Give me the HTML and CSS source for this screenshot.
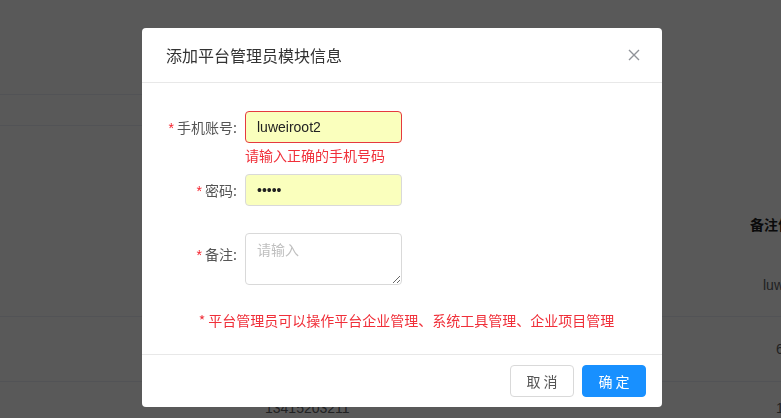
FILE: index.html
```html
<!DOCTYPE html>
<html lang="zh-CN">
<head>
  <meta charset="UTF-8" />
  <title>平台管理员</title>
  <link rel="stylesheet" href="styles.css">
</head>
<body>
  <!-- page behind the modal -->
  <div class="page">
    <div class="page-head"></div>
    <div class="page-filter"></div>
    <div class="grid">
      <div class="grid-row grid-head">
        <div class="c1"></div>
        <div class="c2"></div>
        <div class="c3">备注信息</div>
      </div>
      <div class="grid-row">
        <div class="c1"></div>
        <div class="c2"></div>
        <div class="c3 ind1">luweiroot2</div>
      </div>
      <div class="grid-row">
        <div class="c1"></div>
        <div class="c2"></div>
        <div class="c3 ind2">6</div>
      </div>
      <div class="grid-row">
        <div class="c1"></div>
        <div class="c2 low">13415203211</div>
        <div class="c3 ind2 low">1</div>
      </div>
    </div>
  </div>

  <div class="mask"></div>

  <div class="dialog-wrap">
    <div class="dialog">
      <div class="dialog-header">
        <span class="dialog-title">添加平台管理员模块信息</span>
        <svg class="dialog-close" width="12" height="12" viewBox="0 0 12 12">
          <path d="M1 1 L11 11 M11 1 L1 11" stroke="#909399" stroke-width="1.4" fill="none"/>
        </svg>
      </div>

      <div class="dialog-body">
        <div class="form-item item-phone">
          <label class="form-label"><span class="req">*</span> 手机账号:</label>
          <div class="form-field">
            <input class="form-input is-error" type="text" value="luweiroot2">
            <div class="form-error">请输入正确的手机号码</div>
          </div>
        </div>

        <div class="form-item item-pass">
          <label class="form-label"><span class="req">*</span> 密码:</label>
          <div class="form-field">
            <input class="form-input" type="password" value="12345">
          </div>
        </div>

        <div class="form-item item-note">
          <label class="form-label tall"><span class="req">*</span> 备注:</label>
          <div class="form-field">
            <textarea class="form-textarea" placeholder="请输入"></textarea>
          </div>
        </div>

        <p class="tip">* 平台管理员可以操作平台企业管理、系统工具管理、企业项目管理</p>
      </div>

      <div class="dialog-footer">
        <button class="btn">取 消</button>
        <button class="btn btn-primary">确 定</button>
      </div>
    </div>
  </div>
</body>
</html>
```

FILE: styles.css
```css
html, body {
  margin: 0;
  overflow: hidden;
  height: 100%;
}

body {
  font-family: "Liberation Sans", "Noto Sans CJK SC", sans-serif;
  font-size: 14px;
  color: #606266;
  background: #fff;
}

/* background page */
.page {
  width: 781px;
  overflow: hidden;
}

.page-head {
  width: 420px;
  height: 94px;
  border-bottom: 1px solid #ebeef5;
}

.page-filter {
  width: 420px;
  height: 30px;
  border-bottom: 1px solid #ebeef5;
}

.grid {
  margin-top: 68px;
}

.grid-row {
  display: flex;
  align-items: center;
  height: 63px;
  border-bottom: 1px solid #ebeef5;
  white-space: nowrap;
}

.grid-row.grid-head {
  height: 59px;
  border-bottom: none;
  font-weight: bold;
  color: #222;
}

.grid-row:nth-child(3) {
  height: 64px;
}

.c1 { width: 265px; flex: none; }
.c2 { width: 485px; flex: none; }
.c3 { flex: none; }

.low {
  align-self: flex-start;
  padding-top: 18px;
}

.ind1 { padding-left: 13px; }
.ind2 { padding-left: 26px; }

/* modal */
.mask {
  position: fixed;
  inset: 0;
  background: rgba(0, 0, 0, 0.65);
}

.dialog-wrap {
  position: fixed;
  inset: 0;
  padding: 28px 0 0 142px;
}

.dialog {
  width: 520px;
  background: #fff;
  border-radius: 4px;
  overflow: hidden;
}

.dialog-header {
  display: flex;
  align-items: center;
  justify-content: space-between;
  padding: 16px 22px 16px 24px;
  line-height: 22px;
  border-bottom: 1px solid #e8e8e8;
}

.dialog-title {
  font-size: 16px;
  color: #333;
  font-family: "Noto Sans CJK SC", sans-serif;
}

.dialog-close {
  display: block;
}

.dialog-body {
  padding: 28px 24px 24px 24px;
}

.form-item {
  display: flex;
  align-items: flex-start;
}

.item-phone { margin-bottom: 9px; }
.item-pass { margin-bottom: 27px; }
.item-note { margin-bottom: 25px; }

.form-label {
  width: 79px;
  box-sizing: border-box;
  padding-right: 8px;
  text-align: right;
  line-height: 32px;
  color: #555;
  font-family: "Noto Sans CJK SC", sans-serif;
}

.form-label.tall {
  line-height: 40px;
}

.req {
  color: #f5222d;
  font-family: "Liberation Sans", sans-serif;
}

.form-input {
  display: block;
  box-sizing: border-box;
  width: 157px;
  height: 32px;
  padding: 0 11px;
  border: 1px solid #d9d9d9;
  border-radius: 4px;
  background: #faffbd;
  font-family: "Liberation Sans", "Noto Sans CJK SC", sans-serif;
  font-size: 14px;
  color: #222;
  outline: none;
}

.form-input.is-error {
  border-color: #e5393f;
}

.form-error {
  margin-top: 2px;
  line-height: 20px;
  color: #f0303a;
  font-family: "Noto Sans CJK SC", sans-serif;
}

.form-textarea {
  display: block;
  box-sizing: border-box;
  width: 157px;
  height: 52px;
  margin-top: -1px;
  padding: 5px 11px;
  border: 1px solid #d9d9d9;
  border-radius: 4px;
  font-family: "Noto Sans CJK SC", sans-serif;
  font-size: 14px;
  line-height: 20px;
  outline: none;
}

.form-textarea::placeholder {
  color: #bfbfbf;
}

.tip {
  margin: 0;
  padding-left: 9px;
  text-align: center;
  line-height: 20px;
  color: #f0303a;
  font-family: "Noto Sans CJK SC", sans-serif;
}

.dialog-footer {
  display: flex;
  justify-content: flex-end;
  gap: 8px;
  padding: 10px 16px;
  border-top: 1px solid #e8e8e8;
}

.btn {
  width: 64px;
  height: 32px;
  border: 1px solid #d9d9d9;
  border-radius: 4px;
  background: #fff;
  color: #555;
  font-family: "Noto Sans CJK SC", sans-serif;
  font-size: 14px;
  cursor: pointer;
}

.btn-primary {
  background: #1890ff;
  border-color: #1890ff;
  color: #fff;
}
```
